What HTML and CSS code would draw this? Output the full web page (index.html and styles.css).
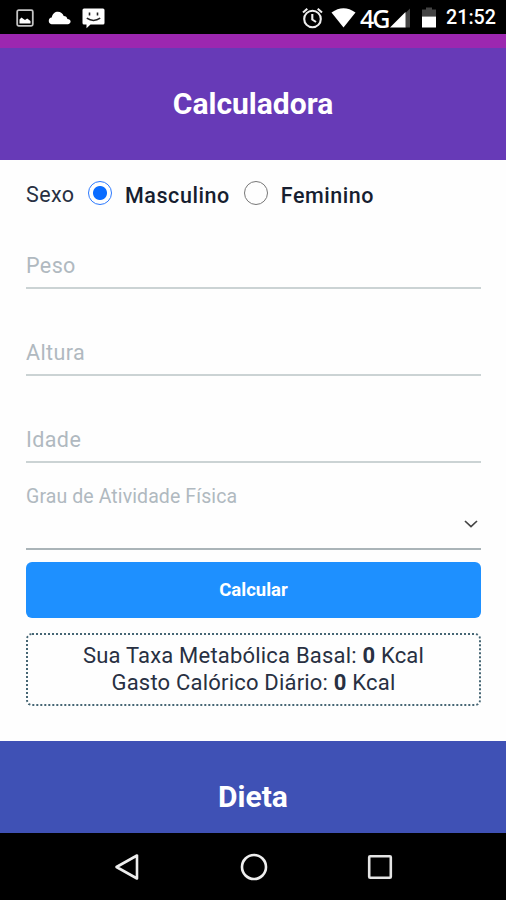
FILE: index.html
```
<!DOCTYPE html>
<html lang="pt-BR">
<head>
    <meta charset="UTF-8">
    <meta name="viewport" content="width=device-width, initial-scale=1.0">
    <title>Calculadora</title>
    <link rel="stylesheet" href="styles.css">
</head>
<body>
    <div class="status-bar">
        <svg class="icon-photo" width="18" height="18" viewBox="0 0 18 18">
            <rect x="1.2" y="1.2" width="15.6" height="15.6" rx="1.5" fill="none" stroke="#c4c4c4" stroke-width="1.8"/>
            <path d="M3.5 14.500v-4l2-2 2 1.500 1.500 1 2.200-1.500 3.300 2.500v2.500z" fill="#fff"/>
        </svg>
        <svg class="icon-cloud" width="23" height="14" viewBox="0 0 23 14">
            <path d="M3.500 13.200a3.400 3.400 0 0 1 .2-6.700C4.500 2.500 7 .7 9.800.7c2.900 0 5 1.700 5.900 4.200 2.200 0 3.300 1.300 3.700 3 1.900.1 3.200 1.100 3.200 2.700 0 1.500-1.200 2.600-2.800 2.600z" fill="#fff"/>
        </svg>
        <svg class="icon-message" width="23" height="21" viewBox="0 0 23 21">
            <path d="M2 .5h19q1.500 0 1.500 1.500v13q0 1.500-1.500 1.500H8.500L4.500 20.300v-3.800H2Q.5 16.500.5 15V2Q.5.5 2 .5z" fill="#fff"/>
            <path d="M7.500 4.500v3M15.500 4.500v3M4.800 10.200q6.700 4.600 13.400 0" fill="none" stroke="#222" stroke-width="1.6"/>
        </svg>
        <div class="status-right">
            <svg class="icon-alarm" width="21" height="22" viewBox="0 0 21 22">
                <circle cx="10.500" cy="12" r="8.300" fill="none" stroke="#eee" stroke-width="2.100"/>
                <path d="M1 5.500l4.300-3.700M20 5.500l-4.300-3.700M10.300 7v5.500l3.700 2.500" fill="none" stroke="#eee" stroke-width="2.100"/>
            </svg>
            <svg class="icon-wifi" width="25" height="20" viewBox="0 0 25 20">
                <path d="M.5 4.500q12-8.500 24 0L12.500 19.500z" fill="#fff"/>
            </svg>
            <span class="network">4G</span>
            <svg class="icon-signal" width="21" height="20" viewBox="0 0 21 20">
                <path d="M15 5.500L20 .5v19h-5z" fill="#444"/>
                <path d="M0 19.500L15.500 4v15.500z" fill="#fff"/>
            </svg>
            <svg class="icon-battery" width="14" height="22" viewBox="0 0 14 22">
                <path d="M0 9.500V2.500h4V.5h6v2h4v7z" fill="#444"/>
                <path d="M0 9.500h14v11H0z" fill="#fff"/>
            </svg>
            <span class="clock">21:52</span>
        </div>
    </div>

    <div class="top-strip"></div>
    <header class="section-title calc-title">
        <h1>Calculadora</h1>
    </header>

    <form class="calc-form">
        <div class="gender">
            <span class="gender-label">Sexo</span>
            <label><input type="radio" name="sexo" value="m" checked>Masculino</label>
            <label><input type="radio" name="sexo" value="f">Feminino</label>
        </div>

        <input class="field" type="text" placeholder="Peso" aria-label="Peso">
        <input class="field" type="text" placeholder="Altura" aria-label="Altura">
        <input class="field" type="text" placeholder="Idade" aria-label="Idade">

        <div class="select-field">
            <span>Grau de Atividade Física</span>
            <svg width="14" height="8" viewBox="0 0 14 8">
                <path d="M1 1l6 5.700L13 1" fill="none" stroke="#444" stroke-width="1.700"/>
            </svg>
        </div>

        <button class="calc-btn" type="button">Calcular</button>

        <div class="result">
            <p>Sua Taxa Metabólica Basal: <b>0</b> Kcal</p>
            <p>Gasto Calórico Diário: <b>0</b> Kcal</p>
        </div>
    </form>

    <section class="section-title diet-title">
        <h1>Dieta</h1>
    </section>

    <nav class="nav-bar">
        <svg width="26" height="28" viewBox="0 0 26 28">
            <path d="M23 2.500v23L2.500 14z" fill="none" stroke="#eee" stroke-width="2.600" stroke-linejoin="round"/>
        </svg>
        <svg width="28" height="28" viewBox="0 0 28 28">
            <circle cx="14" cy="14" r="12" fill="none" stroke="#eee" stroke-width="2.600"/>
        </svg>
        <svg width="26" height="26" viewBox="0 0 26 26">
            <rect x="2.200" y="2.200" width="21.600" height="21.600" rx="1" fill="none" stroke="#e4e4e4" stroke-width="2.600"/>
        </svg>
    </nav>
</body>
</html>
```
FILE: styles.css
```
* {
    box-sizing: border-box;
    margin: 0;
    padding: 0;
}

body {
    height: 900px;
    display: flex;
    flex-direction: column;
    overflow: hidden;
    font-family: Roboto, sans-serif;
    background-color: #fefefe;
    color: #283042;
}

svg {
    display: block;
    flex: none;
}

.status-bar {
    height: 34px;
    padding: 1px 10px 0 16px;
    display: flex;
    align-items: center;
    background-color: #000;
    color: #fff;
}

.icon-cloud {
    margin-left: 14px;
}

.icon-message {
    margin: 2px 0 0 11px;
}

.status-right {
    margin-left: auto;
    display: flex;
    align-items: center;
}

.icon-wifi {
    margin-left: 8px;
}

.network {
    margin-left: 4px;
    width: 27px;
    font-family: "Noto Sans", sans-serif;
    font-size: 25px;
    font-weight: 500;
    letter-spacing: -2px;
    line-height: 32px;
    white-space: nowrap;
}

.icon-signal {
    margin-left: 3px;
}

.icon-battery {
    margin-left: 11px;
}

.clock {
    margin-left: 10px;
    width: 50px;
    font-size: 19.7px;
    font-weight: 500;
    line-height: 30px;
}

.top-strip {
    height: 14px;
    background-color: #9c27b0;
}

.section-title {
    display: flex;
    justify-content: center;
    align-items: center;
    color: #fff;
}

.section-title h1 {
    font-size: 30px;
    font-weight: 700;
}

.calc-title {
    height: 112px;
    padding-bottom: 2px;
    background-color: #673ab7;
}

.calc-form {
    height: 581px;
    padding: 0 25px 0 26px;
    display: flex;
    flex-direction: column;
}

.gender {
    height: 42px;
    padding-top: 20px;
    display: flex;
    align-items: flex-start;
    font-size: 21.5px;
    line-height: 30px;
}

.gender-label {
    width: 62px;
    letter-spacing: 0.4px;
}

.gender label {
    display: flex;
    margin-right: 14px;
    padding-top: 1px;
    color: #171e30;
    font-weight: 500;
    letter-spacing: 0.55px;
}

.gender input {
    appearance: none;
    width: 24px;
    height: 24px;
    margin: 0 13px 0 0;
    border: 1.5px solid #777;
    border-radius: 50%;
}

.gender input:checked {
    border-color: #2b79ff;
    background: radial-gradient(circle, #0a6cff 6.5px, transparent 7.5px);
}

.field {
    width: 100%;
    height: 87px;
    padding-top: 41px;
    border: none;
    border-bottom: 2px solid #cbd3d4;
    background: none;
    font: 400 21.5px Roboto, sans-serif;
    letter-spacing: 0.4px;
    outline: none;
}

.field::placeholder {
    color: #b0b9c0;
    opacity: 1;
}

.select-field {
    height: 87px;
    padding-top: 21px;
    border-bottom: 2px solid #aab4b8;
    color: #b0b9c0;
    font-size: 19.5px;
    letter-spacing: 0.1px;
    line-height: 26px;
}

.select-field svg {
    margin: 10px 3px 0 auto;
}

.calc-btn {
    height: 56px;
    margin-top: 12px;
    border: none;
    border-radius: 6px;
    background-color: #1e90ff;
    color: #fff;
    font: 700 18.5px Roboto, sans-serif;
}

.result {
    height: 73px;
    margin-top: 15px;
    padding-top: 8px;
    border: 2px dotted #466674;
    border-radius: 6px;
    text-align: center;
    font-size: 22px;
    line-height: 26.5px;
    letter-spacing: 0.2px;
}

.diet-title {
    height: 92px;
    padding-top: 18px;
    background-color: #3f51b5;
}

.nav-bar {
    height: 67px;
    padding: 0 113px 0 114px;
    display: flex;
    justify-content: space-between;
    align-items: center;
    background-color: #000;
}
```
